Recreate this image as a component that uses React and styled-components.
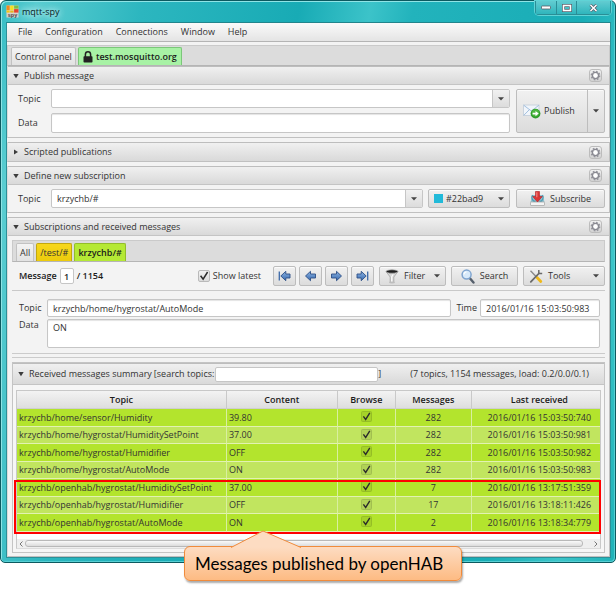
import React from 'react';
import styled, { createGlobalStyle, css } from 'styled-components';

const UI = '"Open Sans", "Noto Sans", sans-serif';
const face = 'linear-gradient(#f1f1f1, #dcdcdc)';

const GlobalStyle = createGlobalStyle`
  *, *::before, *::after { box-sizing: border-box; }
  body { margin: 0; background: #fff; color: #333; font: 9px/12px ${UI}; }
  button, input, textarea, select { font: inherit; color: inherit; margin: 0; padding: 0; }
  svg { display: block; flex: none; }
`;

/* ---------- window frame ---------- */

const Stage = styled.div`
  position: relative;
  padding-bottom: 28px;
`;

const Window = styled.div`
  padding: 0 4px 4px 5px;
  border: 1px solid #0c5a60;
  border-radius: 6px 6px 5px 5px;
  background: linear-gradient(100deg, #35bcc4 0%, #5acdd1 5%, #2cb6bf 20%, #18abb5 42%, #3cc3c9 52%, #22b3bc 58%, #19adb6 82%, #3cc5c9 92%, #1fb2b8 100%);
  box-shadow: inset 1px 1px 0 #8ee4e6, inset -1px -1px 0 #57cfd3;
`;

const TitleBar = styled.header`
  display: flex;
  align-items: flex-start;
  height: 21px;
`;

const AppName = styled.h1`
  flex: 1;
  margin: 4px 0 0 3px;
  font-size: 9px;
  line-height: 13px;
  font-weight: 500;
  color: #0a2225;
  text-shadow: 0 0 6px #d6f6f6, 0 0 6px #d6f6f6;
`;

const AppIcon = styled.svg`
  margin: 4px 0 0;
`;

const WindowButtons = styled.div`
  display: flex;
  border: 1px solid #2a8e96;
  border-top: 0;
  border-radius: 0 0 4px 4px;
  box-shadow: 0 0 0 1px #5fd3d6;
`;

const WindowButton = styled.button`
  display: grid;
  place-items: center;
  width: ${p => (p.$wide ? 34 : 20)}px;
  height: 13px;
  border: 0;
  border-left: ${p => (p.$first ? 0 : '1px solid #2a8e96')};
  background: linear-gradient(#62ccd1, #2fb5bc);
`;

const Client = styled.main`
  border: 1px solid #2c9098;
  border-top-color: #22858c;
  background: #f3f3f3;
`;

/* ---------- menu and tabs ---------- */

const MenuBar = styled.nav`
  display: flex;
  gap: 13px;
  height: 19px;
  padding: 0 11px;
  align-items: center;
  border-bottom: 1px solid #b4b4b4;
  background: linear-gradient(#fafafa, #e4e4e4);
`;

const MenuItem = styled.button`
  border: 0;
  background: none;
`;

const TabStrip = styled.div`
  display: flex;
  align-items: flex-end;
  gap: 2px;
  margin: ${p => (p.$inner ? 0 : '3px 0 0')};
  padding: 3px 3px 0;
  height: ${p => (p.$inner ? 22 : 21)}px;
  border: 1px solid #cacaca;
  border-bottom-color: #b5b5b5;
  background: #dcdcdc;
`;

const tabTones = {
  plain: css`background: linear-gradient(#f4f4f4, #e2e2e2); border-color: #c2c2c2;`,
  mint: css`background: #a8f2a5; border-color: #7cc77a;`,
  gold: css`background: linear-gradient(#f7d71c, #eccb0c); border-color: #c3a80e;`,
  lime: css`background: #b5e935; border-color: #93bd2b;`,
};

const Tab = styled.button`
  display: flex;
  align-items: center;
  gap: 3px;
  height: 18px;
  padding: 0 ${p => (p.$tone === 'mint' ? 4 : 3)}px;
  border: 1px solid;
  border-bottom: 0;
  border-radius: 2px 2px 0 0;
  font-weight: ${p => (p['aria-selected'] ? 600 : 400)};
  color: ${p => (p['aria-selected'] ? '#1c1c1c' : '#333')};
  ${p => tabTones[p.$tone]}
`;

/* ---------- titled sections ---------- */

const Section = styled.section`
  margin-bottom: ${p => (p.$last ? 0 : 4)}px;
  border: 1px solid #c0c0c0;
  border-top: 0;
  border-left-color: #dadada;
`;

const SectionHeader = styled.div`
  display: flex;
  align-items: center;
  height: ${p => (p.$tall ? 22 : 19)}px;
  padding: 0 7px 0 5px;
  border-top: 1px solid #bdbdbd;
  border-bottom: ${p => (p.$closed ? 0 : '1px solid #c4c4c4')};
  background: linear-gradient(#f0f0f0, #d9d9d9);
`;

const Disclosure = styled.button`
  display: flex;
  align-items: center;
  gap: 5px;
  flex: ${p => (p.$hug ? 'none' : 1)};
  border: 0;
  background: none;
  text-align: left;
  white-space: nowrap;
`;

const GearButton = styled.button`
  display: grid;
  place-items: center;
  width: 13px;
  height: 13px;
  border: 1px solid #bcbcbc;
  border-radius: 3px;
  background: linear-gradient(#f2f2f2, #d2d2d2);
`;

/* ---------- form controls ---------- */

const FormGrid = styled.div`
  display: grid;
  grid-template-columns: 27px minmax(0, 1fr) 89px;
  column-gap: 6px;
  row-gap: 5px;
  align-items: center;
  padding: 4px 4px 4px 10px;
`;

const field = css`
  border: 1px solid #c6c6c6;
  border-radius: 2px;
  background: #fff;
`;

const TextField = styled.input`
  ${field}
  flex: 1;
  min-width: 0;
  width: 100%;
  height: 18px;
  padding: 0 5px;
  box-shadow: inset 0 1px 1px #e4e4e4;
`;

const DataArea = styled.textarea`
  ${field}
  display: block;
  width: 100%;
  height: ${p => p.$h}px;
  padding: 2px 5px;
  resize: none;
  box-shadow: inset 0 1px 1px #e4e4e4;
`;

const Combo = styled.div`
  ${field}
  display: flex;
  flex: 1;
  min-width: 0;
  height: 19px;
  overflow: hidden;
`;

const ComboInput = styled.input`
  flex: 1;
  min-width: 0;
  padding: 0 5px;
  border: 0;
  background: none;
`;

const ComboArrow = styled.button`
  display: grid;
  place-items: center;
  width: 17px;
  border: 0;
  border-left: 1px solid #c6c6c6;
  background: ${face};
`;

const Inline = styled.div`
  display: flex;
  gap: 5px;
`;

const raised = css`
  border: 1px solid #bdbdbd;
  border-radius: 2px;
  background: ${face};
  box-shadow: inset 0 1px 0 #fbfbfb;
`;

const Button = styled.button`
  ${raised}
  display: flex;
  align-items: center;
  justify-content: ${p => (p.$menu ? 'flex-start' : 'center')};
  gap: 5px;
  width: ${p => p.$w}px;
  height: ${p => p.$h || 19}px;
  padding: 0 5px;
  & > svg:last-child { margin-left: ${p => (p.$menu ? 'auto' : 0)}; }
`;

const SplitButton = styled.div`
  ${raised}
  display: flex;
  grid-row: span 2;
  align-self: stretch;
`;

const SplitPart = styled.button`
  display: flex;
  align-items: center;
  justify-content: center;
  gap: 3px;
  padding: 0 6px 0 0;
  flex: 1;
  border: 0;
  background: none;
`;

const SplitArrow = styled.button`
  display: grid;
  place-items: center;
  width: 17px;
  border: 0;
  border-left: 1px solid #bdbdbd;
  background: none;
`;

const ColorPicker = styled.div`
  ${raised}
  display: flex;
  align-items: center;
  gap: 3px;
  width: 82px;
  padding: 0 5px;
`;

const Swatch = styled.span`
  width: 9px;
  height: 9px;
  background: #22bad9;
`;

const ColorSelect = styled.select`
  flex: 1;
  min-width: 0;
  border: 0;
  background: none;
  appearance: none;
`;

const CheckBox = styled.span`
  position: relative;
  display: inline-block;
  width: ${p => (p.$flat ? 11 : 12)}px;
  height: ${p => (p.$flat ? 11 : 12)}px;
  input {
    display: block;
    width: 100%;
    height: 100%;
    appearance: none;
    border: 1px solid ${p => (p.$flat ? '#00000018' : '#b9b9b9')};
    border-radius: 2px;
    background: ${p => (p.$flat ? '#00000014' : face)};
  }
  svg { position: absolute; inset: 0; pointer-events: none; }
`;

/* ---------- message browser ---------- */

const Browser = styled.div`
  padding: 4px 4px 3px;
`;

const Toolbar = styled.div`
  display: flex;
  align-items: center;
  gap: 3px;
  height: 29px;
  padding-left: 7px;
  border-bottom: 1px solid #c9c9c9;
  white-space: nowrap;
`;

const Position = styled.div`
  display: flex;
  align-items: center;
  gap: 3px;
  flex: 1;
  font-weight: 600;
  color: #1c1c1c;
`;

const PositionInput = styled.input`
  ${field}
  width: 14px;
  height: 16px;
  text-align: center;
`;

const Latest = styled.label`
  display: flex;
  align-items: center;
  gap: 3px;
  margin-right: 9px;
`;

const Group = styled.div`
  display: flex;
  gap: ${p => p.$gap}px;
  margin-left: ${p => p.$lead || 0}px;
`;

const Details = styled.div`
  display: grid;
  grid-template-columns: 25px minmax(0, 1fr) auto 120px;
  column-gap: 3px;
  row-gap: 2px;
  padding: 8px 5px 5px 7px;
  align-items: center;
  & > label:nth-of-type(2) { padding-left: 2px; }
  & > label:last-of-type { align-self: start; }
  & > textarea { grid-column: 2 / -1; }
`;

const Divider = styled.hr`
  height: 5px;
  margin: 0 0 4px;
  border: 1px solid #cbcbcb;
  border-width: 1px 0;
`;

const Summary = styled.section`
  border: 1px solid #c4c4c4;
  background: #f6f6f6;
`;

const SearchField = styled.input`
  ${field}
  width: 163px;
  height: 15px;
  margin: 0 0 0 1px;
  padding: 0 4px;
`;

const SearchLabel = styled.label`
  margin-left: 2px;
  white-space: nowrap;
`;

const Stats = styled.span`
  margin-left: auto;
  padding-right: 8px;
  white-space: nowrap;
`;

const TableFrame = styled.div`
  position: relative;
  margin: 5px 3px 3px;
  border: 1px solid #c8c8c8;
  border-bottom-color: #dcdcdc;
  background: #fff;
`;

const Table = styled.table`
  width: 100%;
  table-layout: fixed;
  border-collapse: separate;
  border-spacing: 0;
  th, td { padding: 0; overflow: hidden; white-space: nowrap; }
  th {
    height: 18px;
    border-right: 1px solid #c9c9c9;
    border-bottom: 1px solid #cfcfcf;
    background: linear-gradient(#f3f3f3, #dedede);
    font-weight: 600;
    color: #1c1c1c;
  }
  th:last-child { padding-left: 7px; border-right: 0; }
`;

const Row = styled.tr`
  background: ${p => (p.$alt ? '#c1e55f' : '#b3e42d')};
  td {
    height: ${p => (p.$alt ? 17 : 18)}px;
    border-bottom: 1px solid #e2f2b2;
    border-right: 1px solid #d9efa0;
    text-align: center;
  }
  td:nth-child(-n + 2) { padding-left: 2px; text-align: left; }
  td:last-child { padding-left: 7px; border-right: 0; }
`;

const CheckCell = styled.div`
  display: grid;
  place-items: center;
  padding-bottom: 2px;
`;

const BlankRow = styled.div`
  height: 7px;
`;

const ScrollBar = styled.div`
  display: flex;
  align-items: center;
  gap: 2px;
  height: 9px;
  padding: 0 2px;
  background: #efefef;
`;

const Thumb = styled.div`
  flex: 1;
  height: 7px;
  margin-right: 9px;
  border: 1px solid #b9b9b9;
  border-radius: 3px;
  background: linear-gradient(#fafafa, #dcdcdc);
`;

const Highlight = styled.div`
  position: absolute;
  left: -3px;
  right: -1px;
  bottom: 14px;
  height: 54px;
  border: 2px solid #f00;
  pointer-events: none;
`;

/* ---------- annotation ---------- */

const Callout = styled.div`
  position: absolute;
  left: 184px;
  bottom: 10px;
  width: 278px;
  padding: 6px 10px;
  border: 1px solid #f08b3c;
  border-radius: 6px;
  background: linear-gradient(#fddcc2, #fdbb83);
  box-shadow: 1px 2px 2px #00000055;
  color: #000;
  font: 17px/21px Lato, sans-serif;
  white-space: nowrap;
`;

const Tail = styled.svg`
  position: absolute;
  left: 46px;
  top: -17px;
`;

/* ---------- drawings ---------- */

const Arrow = () => (
  <svg width="6" height="4" viewBox="0 0 6 4"><path d="M0 0.3h6L3 3.6z" fill="#444" /></svg>
);

const Triangle = ({ closed }) => (
  <svg width="6" height="6" viewBox="0 0 6 6">
    <path d={closed ? 'M1 0.5v5L5 3z' : 'M0.3 1h5.4L3 5.2z'} fill="#3c3c3c" />
  </svg>
);

const Chevron = ({ right }) => (
  <svg width="4" height="6" viewBox="0 0 4 6">
    <path d={right ? 'M0.5 0.5L3 3 0.5 5.5' : 'M3.5 0.5L1 3l2.500 2.500'} fill="none" stroke="#777" />
  </svg>
);

const Gear = () => (
  <svg width="11" height="11" viewBox="0 0 11 11">
    <circle cx="5.5" cy="5.5" r="4.2" fill="none" stroke="#96969e" strokeWidth="1.4" strokeDasharray="1.7 1.6" />
    <circle cx="5.5" cy="5.5" r="3.100" fill="#f4f4f6" stroke="#8a8a92" strokeWidth="1.400" />
    <circle cx="5.5" cy="5.5" r="1.800" fill="#fff" />
  </svg>
);

const Lock = () => (
  <svg width="10" height="12" viewBox="0 0 10 12">
    <path d="M2.4 6V3.4a2.6 2.6 0 0 1 5.2 0V6" fill="none" stroke="#222" strokeWidth="1.5" />
    <rect x="0.5" y="5.2" width="9" height="6.3" rx="0.8" fill="#222" />
  </svg>
);

const Tick = ({ size }) => (
  <svg width={size} height={size} viewBox="0 0 12 12">
    <path d="M2.6 5.8l2.5 3.4L9.6 2" fill="none" stroke="#2b2b2b" strokeWidth="1.5" />
  </svg>
);

const Logo = () => (
  <AppIcon width="13" height="13" viewBox="0 0 13 13">
    <rect x="0.5" y="0.5" width="12" height="12" fill="#d9d2cc" />
    <path d="M0.500 0.500h3.200V5H.5z" fill="#f08a1d" />
    <path d="M4.2 0.500h3.400v4.800H4.200z" fill="#f5e11e" />
    <path d="M8.100 0.500h4.400v3.200H8.100z" fill="#7cc142" />
    <path d="M0.500 5.400h3.200v2.200H.5z" fill="#f3c511" />
    <path d="M4.200 5.700h3.400v1.900H4.200z" fill="#e6b51e" />
    <path d="M8.100 4.100h4.400v3.500H8.100z" fill="#e5402a" />
    <text x="6.500" y="11.600" fontSize="5.500" fontWeight="700" textAnchor="middle" fill="#444" fontFamily="Liberation Sans">spy</text>
  </AppIcon>
);

const MailIcon = () => (
  <svg width="18" height="16" viewBox="0 0 18 16">
    <rect x="0.5" y="2" width="15.500" height="10.500" fill="#f1f5fa" stroke="#c9d3de" />
    <path d="M0.800 2.300l7.500 5.700 7.500-5.700M0.800 12.300l5.500-5.600M15.700 12.300l-5.500-5.600" fill="none" stroke="#8fb2d8" strokeWidth="0.8" />
    <circle cx="12.500" cy="10.600" r="4.900" fill="#2f9e2b" />
    <circle cx="12.500" cy="9.800" r="3.600" fill="#4db540" />
    <path d="M9.600 9.800h2.900V8l3.200 2.600-3.200 2.600v-1.800H9.600z" fill="#fff" />
  </svg>
);

const SubscribeIcon = () => (
  <svg width="15" height="15" viewBox="0 0 15 15">
    <path d="M2.500 4h10l2 7H.5z" fill="#8fc0cf" />
    <path d="M2.500 4C.8 6.500 2.500 10.500 5.500 10.500M12.500 4c1.700 2.500 0 6.500-3 6.500" stroke="#4b9cb3" fill="none" strokeWidth="1.300" />
    <rect x="0.500" y="11" width="14" height="3.500" rx="0.5" fill="#f4f4f4" stroke="#a9a9a9" strokeWidth="0.8" />
    <path d="M5.500.5h4v5h2.800L7.500 11 2.700 5.500h2.800z" fill="#dc3535" stroke="#b01f25" strokeWidth="0.6" />
    <path d="M6.200 1.200h1.200v5H6.200z" fill="#f28480" />
  </svg>
);

const NavIcon = ({ flip, bar }) => (
  <svg width="13" height="12" viewBox="0 0 13 12">
    <defs>
      <linearGradient id="nav" x1="0" y1="0" x2="0" y2="1">
        <stop offset="0" stopColor="#8fb6e4" />
        <stop offset="1" stopColor="#3568ae" />
      </linearGradient>
    </defs>
    <g transform={flip ? 'translate(13 0) scale(-1 1)' : undefined}>
      <path d={bar ? 'M2.800 6l5-4.700v2.700h4.200v4H7.800v2.700z' : 'M1.500 6l5-4.700v2.700H11.500v4H6.500v2.700z'} fill="url(#nav)" stroke="#2c4f86" strokeWidth="0.9" />
      {bar && <path d="M1.300 1.500v9" stroke="#3c69a8" strokeWidth="1.300" />}
    </g>
  </svg>
);

const FilterIcon = () => (
  <svg width="14" height="15" viewBox="0 0 14 15">
    <path d="M1 2.500h12L8.800 8v5.500H5.200V8z" fill="#d9d9d9" stroke="#9a9a9a" strokeWidth="0.7" />
    <path d="M9 3.500L7.300 8v5H6.200V7.500z" fill="#fff" />
    <ellipse cx="7" cy="2.500" rx="5.800" ry="1.700" fill="#1f1f1f" stroke="#aaa" strokeWidth="0.700" />
    <ellipse cx="7" cy="13.500" rx="3" ry="0.9" fill="#bdbdbd" />
  </svg>
);

const SearchIcon = () => (
  <svg width="14" height="15" viewBox="0 0 14 15">
    <path d="M8.700 9l3.800 4.500" stroke="#56606c" strokeWidth="2.400" strokeLinecap="round" />
    <circle cx="5.600" cy="5.600" r="4.500" fill="#d8eafa" stroke="#7fa4cf" strokeWidth="1.500" />
    <path d="M3 5.500A2.700 2.700 0 0 1 5.500 3" fill="none" stroke="#fff" strokeWidth="1.100" />
  </svg>
);

const ToolsIcon = () => (
  <svg width="14" height="15" viewBox="0 0 14 15">
    <path d="M1.500 1.800l5.500 5.700" stroke="#8a8a8a" strokeWidth="1.400" />
    <path d="M8 8.500l3.800 4" stroke="#efb91a" strokeWidth="2.800" strokeLinecap="round" />
    <path d="M1.800 12.800l8-8.300" stroke="#6a6a6a" strokeWidth="1.800" strokeLinecap="round" />
    <path d="M9.800 1v3.600h3.400" fill="none" stroke="#6a6a6a" strokeWidth="1.500" />
  </svg>
);

/* ---------- composed parts ---------- */

const Check = ({ flat, ...rest }) => (
  <CheckBox $flat={flat}>
    <input type="checkbox" defaultChecked {...rest} />
    <Tick size={flat ? 11 : 12} />
  </CheckBox>
);

const Titled = ({ title, closed, last, children }) => (
  <Section $last={last}>
    <SectionHeader $closed={closed}>
      <Disclosure aria-expanded={!closed}><Triangle closed={closed} />{title}</Disclosure>
      <GearButton aria-label={`${title} options`}><Gear /></GearButton>
    </SectionHeader>
    {children}
  </Section>
);

const messages = [
  ['krzychb/home/sensor/Humidity', '39.80', 282, '2016/01/16 15:03:50:740'],
  ['krzychb/home/hygrostat/HumiditySetPoint', '37.00', 282, '2016/01/16 15:03:50:981'],
  ['krzychb/home/hygrostat/Humidifier', 'OFF', 282, '2016/01/16 15:03:50:982'],
  ['krzychb/home/hygrostat/AutoMode', 'ON', 282, '2016/01/16 15:03:50:983'],
  ['krzychb/openhab/hygrostat/HumiditySetPoint', '37.00', 7, '2016/01/16 13:17:51:359'],
  ['krzychb/openhab/hygrostat/Humidifier', 'OFF', 17, '2016/01/16 13:18:11:426'],
  ['krzychb/openhab/hygrostat/AutoMode', 'ON', 2, '2016/01/16 13:18:34:779'],
];

export default function App() {
  return (
    <Stage>
      <GlobalStyle />
      <Window>
        <TitleBar>
          <Logo />
          <AppName>mqtt-spy</AppName>
          <WindowButtons>
            <WindowButton $first aria-label="Minimize">
              <svg width="10" height="5" viewBox="0 0 10 5"><rect x="0.500" y="1" width="9" height="3" rx="0.800" fill="#fff" stroke="#555a66" strokeWidth="0.8" /></svg>
            </WindowButton>
            <WindowButton aria-label="Maximize">
              <svg width="10" height="8" viewBox="0 0 10 8"><rect x="1.500" y="1.500" width="7" height="5" fill="none" stroke="#555a66" strokeWidth="3" /><rect x="1.500" y="1.500" width="7" height="5" fill="none" stroke="#fff" strokeWidth="1.600" /></svg>
            </WindowButton>
            <WindowButton $wide aria-label="Close">
              <svg width="9" height="8" viewBox="0 0 9 8"><path d="M1.500 1l6 6M7.500 1l-6 6" stroke="#555a66" strokeWidth="3" /><path d="M1.500 1l6 6M7.500 1l-6 6" stroke="#fff" strokeWidth="1.500" /></svg>
            </WindowButton>
          </WindowButtons>
        </TitleBar>

        <Client>
          <MenuBar>
            {['File', 'Configuration', 'Connections', 'Window', 'Help'].map(m => <MenuItem key={m}>{m}</MenuItem>)}
          </MenuBar>
          <TabStrip role="tablist">
            <Tab role="tab" aria-selected={false} $tone="plain">Control panel</Tab>
            <Tab role="tab" aria-selected $tone="mint"><Lock />test.mosquitto.org</Tab>
          </TabStrip>

          <Titled title="Publish message">
            <FormGrid>
              <label htmlFor="pub-topic">Topic</label>
              <Combo>
                <ComboInput id="pub-topic" />
                <ComboArrow aria-label="Recent topics"><Arrow /></ComboArrow>
              </Combo>
              <SplitButton>
                <SplitPart><MailIcon />Publish</SplitPart>
                <SplitArrow aria-label="Publish options"><Arrow /></SplitArrow>
              </SplitButton>
              <label htmlFor="pub-data">Data</label>
              <DataArea id="pub-data" $h={20} />
            </FormGrid>
          </Titled>

          <Titled title="Scripted publications" closed />

          <Titled title="Define new subscription">
            <FormGrid>
              <label htmlFor="sub-topic">Topic</label>
              <Inline>
                <Combo>
                  <ComboInput id="sub-topic" defaultValue="krzychb/#" />
                  <ComboArrow aria-label="Recent subscriptions"><Arrow /></ComboArrow>
                </Combo>
                <ColorPicker>
                  <Swatch />
                  <ColorSelect aria-label="Colour"><option>#22bad9</option></ColorSelect>
                  <Arrow />
                </ColorPicker>
              </Inline>
              <Button><SubscribeIcon />Subscribe</Button>
            </FormGrid>
          </Titled>

          <Titled title="Subscriptions and received messages" last>
            <Browser>
              <TabStrip role="tablist" $inner>
                <Tab role="tab" aria-selected={false} $tone="plain">All</Tab>
                <Tab role="tab" aria-selected={false} $tone="gold">/test/#</Tab>
                <Tab role="tab" aria-selected $tone="lime">krzychb/#</Tab>
              </TabStrip>

              <Toolbar>
                <Position>
                  <label htmlFor="position">Message</label>
                  <PositionInput id="position" defaultValue="1" />
                  / 1154
                </Position>
                <Latest><Check />Show latest</Latest>
                <Group $gap={3}>
                  <Button $w={23} $h={20} aria-label="First"><NavIcon bar /></Button>
                  <Button $w={23} $h={20} aria-label="Previous"><NavIcon /></Button>
                  <Button $w={23} $h={20} aria-label="Next"><NavIcon flip /></Button>
                  <Button $w={23} $h={20} aria-label="Last"><NavIcon flip bar /></Button>
                </Group>
                <Group $gap={5} $lead={2}>
                  <Button $w={67} $h={20} $menu><FilterIcon />Filter<Arrow /></Button>
                  <Button $w={67} $h={20}><SearchIcon />Search</Button>
                  <Button $w={82} $h={20} $menu><ToolsIcon />Tools<Arrow /></Button>
                </Group>
              </Toolbar>

              <Details>
                <label htmlFor="msg-topic">Topic</label>
                <TextField id="msg-topic" defaultValue="krzychb/home/hygrostat/AutoMode" />
                <label htmlFor="msg-time">Time</label>
                <TextField id="msg-time" defaultValue="2016/01/16 15:03:50:983" />
                <label htmlFor="msg-data">Data</label>
                <DataArea id="msg-data" $h={29} defaultValue="ON" />
              </Details>
              <Divider />

              <Summary>
                <SectionHeader $tall>
                  <Disclosure $hug aria-expanded><Triangle />Received messages summary</Disclosure>
                  <SearchLabel htmlFor="search-topics">[search topics:</SearchLabel>
                  <SearchField id="search-topics" />
                  ]
                  <Stats>(7 topics, 1154 messages, load: 0.2/0.0/0.1)</Stats>
                </SectionHeader>
                <TableFrame>
                  <Table>
                    <colgroup>
                      <col width="36%" /><col width="19%" /><col width="10%" /><col width="13%" /><col width="22%" />
                    </colgroup>
                    <thead>
                      <tr><th>Topic</th><th>Content</th><th>Browse</th><th>Messages</th><th>Last received</th></tr>
                    </thead>
                    <tbody>
                      {messages.map(([topic, content, count, time], i) => (
                        <Row key={topic} $alt={i % 2 === 1}>
                          <td>{topic}</td>
                          <td>{content}</td>
                          <td><CheckCell><Check flat aria-label={`Browse ${topic}`} /></CheckCell></td>
                          <td>{count}</td>
                          <td>{time}</td>
                        </Row>
                      ))}
                    </tbody>
                  </Table>
                  <BlankRow />
                  <ScrollBar><Chevron /><Thumb /><Chevron right /></ScrollBar>
                  <Highlight />
                </TableFrame>
              </Summary>
            </Browser>
          </Titled>
        </Client>
      </Window>

      <Callout>
        Messages published by openHAB
        <Tail width="70" height="18" viewBox="0 0 70 18">
          <path d="M0 17.500L32 1l38 16.500" fill="#fddcc2" stroke="#f08b3c" />
        </Tail>
      </Callout>
    </Stage>
  );
}
